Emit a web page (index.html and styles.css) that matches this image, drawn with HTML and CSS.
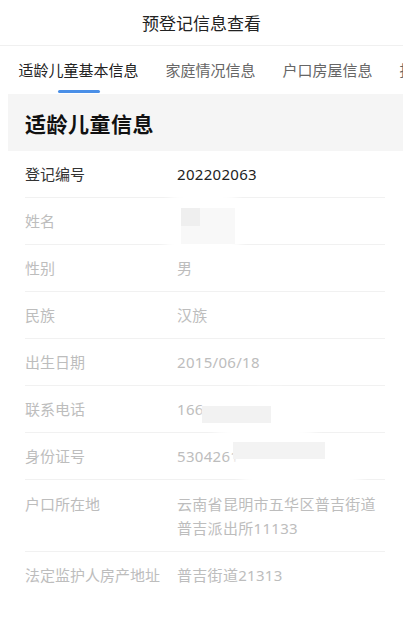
FILE: index.html
```html
<!DOCTYPE html>
<html lang="zh-CN">
<head>
<meta charset="utf-8">
<title>预登记信息查看</title>
<link rel="stylesheet" href="styles.css">
</head>
<body>
<header class="nav">预登记信息查看</header>
<nav class="tabs">
  <div class="tab active">适龄儿童基本信息</div>
  <div class="tab">家庭情况信息</div>
  <div class="tab">户口房屋信息</div>
  <div class="tab">报名信息</div>
</nav>
<section class="card-head"><h2>适龄儿童信息</h2></section>
<div class="list">
  <div class="row main"><span class="label">登记编号</span><span class="value">202202063</span></div>
  <div class="row"><span class="label">姓名</span><span class="value">&nbsp;</span>
    <i class="blob blob-name"></i><i class="mask mask-name"></i><i class="mask mask-name-dark"></i></div>
  <div class="row"><span class="label">性别</span><span class="value">男</span></div>
  <div class="row"><span class="label">民族</span><span class="value">汉族</span></div>
  <div class="row"><span class="label">出生日期</span><span class="value">2015/06/18</span></div>
  <div class="row"><span class="label">联系电话</span><span class="value">166</span>
    <i class="blob blob-phone"></i><i class="mask mask-phone"></i></div>
  <div class="row"><span class="label">身份证号</span><span class="value">5304261</span>
    <i class="blob blob-id"></i><i class="mask mask-id"></i></div>
  <div class="row multi"><span class="label">户口所在地</span><span class="value">云南省昆明市五华区普吉街道普吉派出所11133</span></div>
  <div class="row last"><span class="label">法定监护人房产地址</span><span class="value">普吉街道21313</span></div>
</div>
</body>
</html>
```
FILE: styles.css
```css
* { box-sizing: border-box; margin: 0; padding: 0; }
html, body { background: #fff; }
body {
  width: 403px;
  height: 633px;
  overflow: hidden;
  font-family: "PingFang SC", "Noto Sans CJK SC", "Noto Sans", sans-serif;
  color: #333;
}
.nav {
  height: 46px;
  line-height: 45px;
  text-align: center;
  font-size: 17px;
  color: #222;
  border-bottom: 1px solid #f0f0f0;
}
.tabs {
  display: flex;
  height: 48px;
  padding-left: 5px;
  white-space: nowrap;
  overflow: hidden;
}
.tab {
  flex: none;
  position: relative;
  padding: 0 13.5px;
  font-size: 15px;
  line-height: 48px;
  color: #666;
}
.tab.active { color: #222; }
.tab.active::after {
  content: "";
  position: absolute;
  left: 50%;
  bottom: 1px;
  width: 42px;
  height: 3px;
  margin-left: -21px;
  border-radius: 2px;
  background: #4a8fe7;
}
.card-head {
  margin-left: 8px;
  height: 57px;
  background: #f5f5f5;
  display: flex;
  align-items: center;
  padding-left: 17px;
}
.card-head h2 {
  font-size: 21px;
  font-weight: 700;
  letter-spacing: 0.5px;
  color: #111;
}
.list { margin: 0 18px 0 25px; }
.row {
  position: relative;
  display: flex;
  padding: 11px 0;
  border-bottom: 1px solid #f1f1f1;
  font-size: 15px;
  line-height: 24px;
  color: #bdbdbd;
}
.row.multi { padding: 11.5px 0; }
.row.last { border-bottom: none; }
.row.main { color: #333; }
.row.main .value { color: #222; }
.label { flex: none; width: 152px; }
.value {
  flex: 1;
  font-family: "Noto Sans", "PingFang SC", "Noto Sans CJK SC", sans-serif;
  letter-spacing: 0.3px;
}
.blob {
  position: absolute;
  background: #fff;
  border-radius: 50%;
  filter: blur(3px);
}
.mask { position: absolute; }
.blob-name { left: 130px; top: -9px; width: 96px; height: 68px; }
.mask-name { left: 156px; top: 10px; width: 54px; height: 36px; background: #f8f8f8; }
.mask-name-dark { left: 156px; top: 10px; width: 19px; height: 18px; background: #efefef; }
.blob-phone { left: 177px; top: 2px; width: 126px; height: 54px; }
.mask-phone { left: 177px; top: 20px; width: 69px; height: 17px; background: #f2f2f2; }
.blob-id { left: 207px; top: 4px; width: 138px; height: 56px; }
.mask-id { left: 208px; top: 9px; width: 92px; height: 17px; background: #f3f3f3; }
```
